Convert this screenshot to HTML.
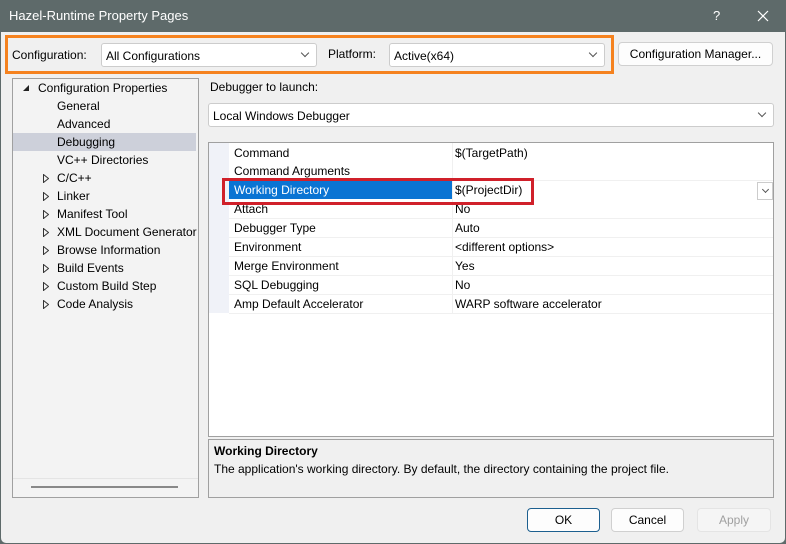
<!DOCTYPE html>
<html><head><style>
*{box-sizing:border-box;margin:0;padding:0}
body{width:786px;height:544px;background:#5e6a6a;font-family:"Liberation Sans",sans-serif;font-size:12px;color:#000;position:relative;overflow:hidden}
.a{position:absolute}
.win{left:0;top:32px;width:786px;height:512px;background:#f0f0f0;border-left:1px solid #5e6a6a;border-right:1px solid #5e6a6a;border-bottom:1px solid #5e6a6a;border-radius:0 0 6px 6px}
.t{white-space:nowrap;line-height:14px}
.combo{background:#fff;border:1px solid #ccc;border-radius:3px;height:24px}
.chev{position:absolute;right:8px;top:6px;width:6px;height:6px;border-right:1px solid #555;border-bottom:1px solid #555;transform:rotate(45deg)}
.btn{background:#fdfdfd;border:1px solid #d0d0d0;border-radius:4px;text-align:center;line-height:22px}
.row{position:absolute;left:234px;height:14px}
.tri{position:absolute;width:6px;height:9px}
</style></head><body>
<div class="a t" style="left:9px;top:9px;color:#fff;font-size:13px">Hazel-Runtime Property Pages</div>
<div class="a t" style="left:713px;top:9px;color:#fff;font-size:13px">?</div>
<svg class="a" style="left:757px;top:10px" width="12" height="12"><path d="M1 1L11 11M11 1L1 11" stroke="#fff" stroke-width="1.2"/></svg>
<div class="a win"></div>

<div class="a" style="left:5px;top:35px;width:609px;height:39px;border:3px solid #f5821f"></div>
<div class="a t" style="left:12px;top:48px">Configuration:</div>
<div class="a combo" style="left:101px;top:43px;width:216px"><span class="a t" style="left:4px;top:5px">All Configurations</span><span class="chev"></span></div>
<div class="a t" style="left:328px;top:47px">Platform:</div>
<div class="a combo" style="left:389px;top:43px;width:216px"><span class="a t" style="left:4px;top:5px">Active(x64)</span><span class="chev"></span></div>
<div class="a btn" style="left:618px;top:42px;width:155px;height:24px">Configuration Manager...</div>

<div class="a" style="left:12px;top:78px;width:187px;height:420px;border:1px solid #a0a0a0;background:#f3f3f3"></div>
<div class="a" style="left:13px;top:133px;width:183px;height:18px;background:#cdd0da"></div>
<svg class="a" style="left:22px;top:84px" width="8" height="8"><path d="M7 1L7 7L1 7Z" fill="#222"/></svg>
<div class="a t" style="left:38px;top:81px">Configuration Properties</div>
<div class="a t" style="left:57px;top:99px">General</div>
<div class="a t" style="left:57px;top:117px">Advanced</div>
<div class="a t" style="left:57px;top:135px">Debugging</div>
<div class="a t" style="left:57px;top:153px">VC++ Directories</div>
<svg class="tri" style="left:43px;top:174px"><path d="M0.5 0.5L5.5 4.5L0.5 8.5Z" fill="none" stroke="#333"/></svg><div class="a t" style="left:57px;top:171px">C/C++</div>
<svg class="tri" style="left:43px;top:192px"><path d="M0.5 0.5L5.5 4.5L0.5 8.5Z" fill="none" stroke="#333"/></svg><div class="a t" style="left:57px;top:189px">Linker</div>
<svg class="tri" style="left:43px;top:210px"><path d="M0.5 0.5L5.5 4.5L0.5 8.5Z" fill="none" stroke="#333"/></svg><div class="a t" style="left:57px;top:207px">Manifest Tool</div>
<svg class="tri" style="left:43px;top:228px"><path d="M0.5 0.5L5.5 4.5L0.5 8.5Z" fill="none" stroke="#333"/></svg><div class="a t" style="left:57px;top:225px">XML Document Generator</div>
<svg class="tri" style="left:43px;top:246px"><path d="M0.5 0.5L5.5 4.5L0.5 8.5Z" fill="none" stroke="#333"/></svg><div class="a t" style="left:57px;top:243px">Browse Information</div>
<svg class="tri" style="left:43px;top:264px"><path d="M0.5 0.5L5.5 4.5L0.5 8.5Z" fill="none" stroke="#333"/></svg><div class="a t" style="left:57px;top:261px">Build Events</div>
<svg class="tri" style="left:43px;top:282px"><path d="M0.5 0.5L5.5 4.5L0.5 8.5Z" fill="none" stroke="#333"/></svg><div class="a t" style="left:57px;top:279px">Custom Build Step</div>
<svg class="tri" style="left:43px;top:300px"><path d="M0.5 0.5L5.5 4.5L0.5 8.5Z" fill="none" stroke="#333"/></svg><div class="a t" style="left:57px;top:297px">Code Analysis</div>
<div class="a" style="left:13px;top:478px;width:185px;height:1px;background:#e4e4e4"></div>
<div class="a" style="left:31px;top:486px;width:147px;height:2px;background:#888"></div>

<div class="a t" style="left:210px;top:80px">Debugger to launch:</div>
<div class="a combo" style="left:208px;top:103px;width:566px"><span class="a t" style="left:4px;top:5px">Local Windows Debugger</span><span class="chev"></span></div>

<div class="a" style="left:208px;top:142px;width:566px;height:295px;border:1px solid #a0a0a0;background:#fff"></div>
<div class="a" style="left:209px;top:143px;width:20px;height:170px;background:#f0f2f8"></div>
<div class="a" style="left:229px;top:180px;width:224px;height:19px;background:#0a74d3"></div>
<div class="a" style="left:452px;top:143px;width:1px;height:170px;background:#f0f0f0"></div>
<div class="a" style="left:229px;top:180px;width:544px;height:1px;background:#f0f0f0"></div>
<div class="a" style="left:229px;top:218px;width:544px;height:1px;background:#f0f0f0"></div>
<div class="a" style="left:229px;top:237px;width:544px;height:1px;background:#f0f0f0"></div>
<div class="a" style="left:229px;top:256px;width:544px;height:1px;background:#f0f0f0"></div>
<div class="a" style="left:229px;top:275px;width:544px;height:1px;background:#f0f0f0"></div>
<div class="a" style="left:229px;top:294px;width:544px;height:1px;background:#f0f0f0"></div>
<div class="a" style="left:229px;top:313px;width:544px;height:1px;background:#f0f0f0"></div>
<div class="row t" style="top:146px">Command</div><div class="a t" style="left:455px;top:146px">$(TargetPath)</div>
<div class="row t" style="top:164px">Command Arguments</div>
<div class="row t" style="top:183px;color:#fff">Working Directory</div><div class="a t" style="left:455px;top:183px">$(ProjectDir)</div>
<div class="row t" style="top:202px">Attach</div><div class="a t" style="left:455px;top:202px">No</div>
<div class="row t" style="top:221px">Debugger Type</div><div class="a t" style="left:455px;top:221px">Auto</div>
<div class="row t" style="top:240px">Environment</div><div class="a t" style="left:455px;top:240px">&lt;different options&gt;</div>
<div class="row t" style="top:259px">Merge Environment</div><div class="a t" style="left:455px;top:259px">Yes</div>
<div class="row t" style="top:278px">SQL Debugging</div><div class="a t" style="left:455px;top:278px">No</div>
<div class="row t" style="top:297px">Amp Default Accelerator</div><div class="a t" style="left:455px;top:297px">WARP software accelerator</div>
<div class="a" style="left:757px;top:182px;width:16px;height:18px;border:1px solid #ccc;background:#fff"><span class="chev" style="right:4px;top:4px;width:5px;height:5px"></span></div>
<div class="a" style="left:222px;top:178px;width:312px;height:27px;border:3px solid #d0202a"></div>

<div class="a" style="left:208px;top:439px;width:566px;height:59px;border:1px solid #a0a0a0;background:#f0f0f0"></div>
<div class="a t" style="left:214px;top:444px;font-weight:bold">Working Directory</div>
<div class="a t" style="left:214px;top:462px">The application's working directory. By default, the directory containing the project file.</div>

<div class="a btn" style="left:527px;top:508px;width:73px;height:24px;border-color:#1c5f8f">OK</div>
<div class="a btn" style="left:611px;top:508px;width:73px;height:24px">Cancel</div>
<div class="a btn" style="left:697px;top:508px;width:74px;height:24px;color:#a0a0a0;background:#f5f5f5;border-color:#e4e4e4">Apply</div>
</body></html>
